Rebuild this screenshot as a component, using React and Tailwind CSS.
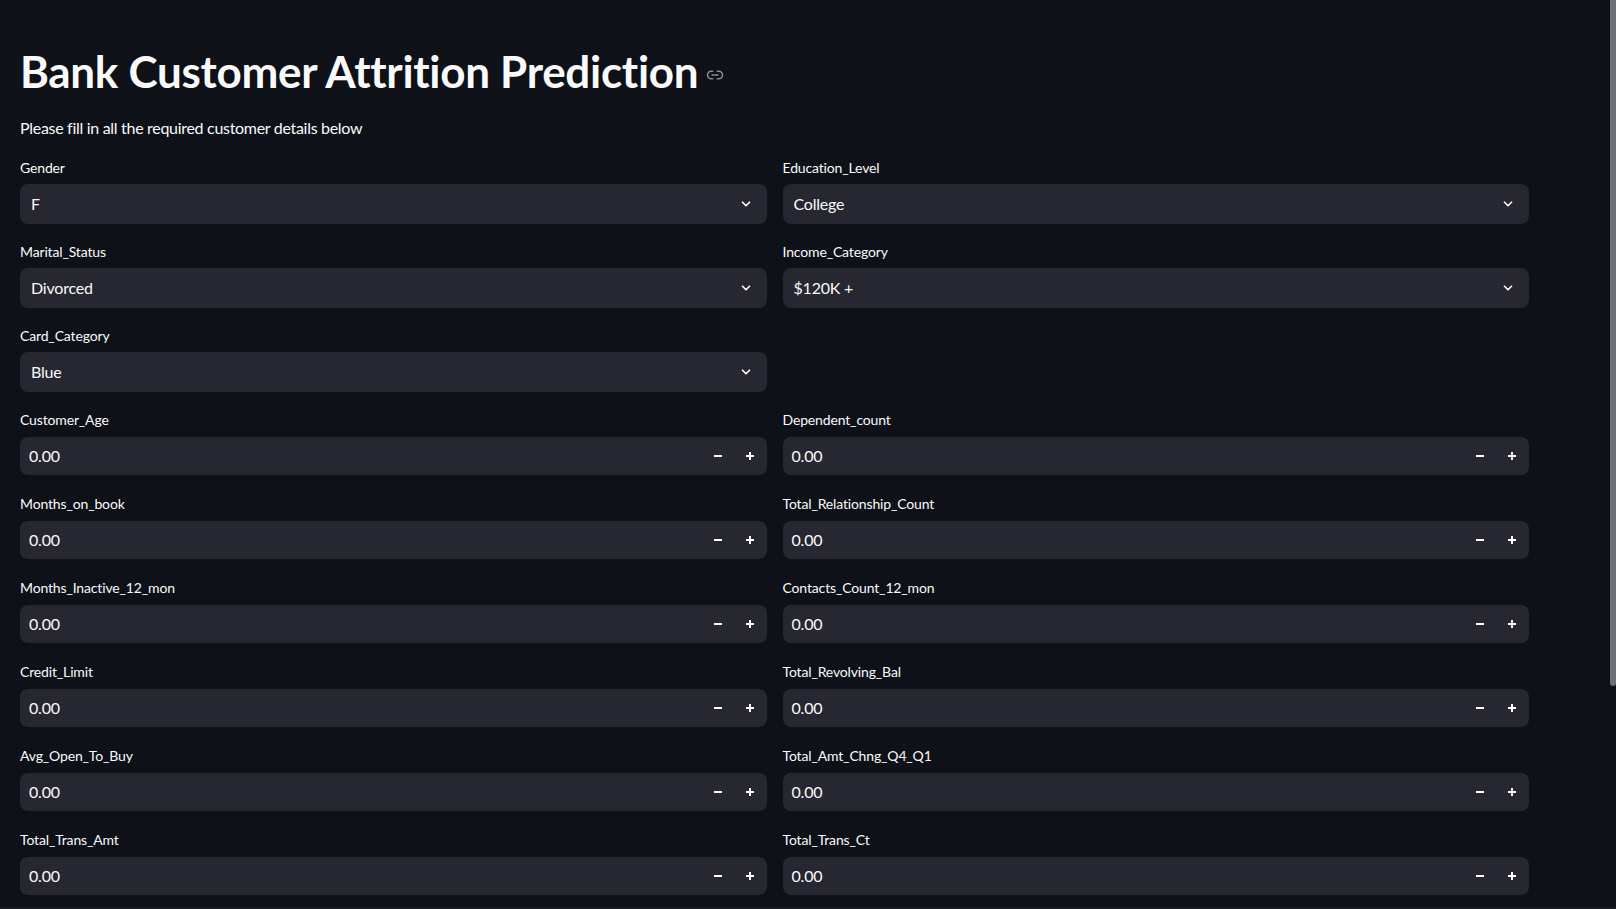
import React from 'react';

const font = { fontFamily: 'Lato, "Noto Sans", sans-serif' };

const selects = [
    [{ label: 'Gender', value: 'F' }, { label: 'Education_Level', value: 'College' }],
    [{ label: 'Marital_Status', value: 'Divorced' }, { label: 'Income_Category', value: '$120K +' }],
    [{ label: 'Card_Category', value: 'Blue' }, null],
];

const numbers = [
    ['Customer_Age', 'Dependent_count'],
    ['Months_on_book', 'Total_Relationship_Count'],
    ['Months_Inactive_12_mon', 'Contacts_Count_12_mon'],
    ['Credit_Limit', 'Total_Revolving_Bal'],
    ['Avg_Open_To_Buy', 'Total_Amt_Chng_Q4_Q1'],
    ['Total_Trans_Amt', 'Total_Trans_Ct'],
];

function Chevron() {
    return (
        <svg width="14" height="14" viewBox="0 0 24 24" fill="none" stroke="#fafafa" strokeWidth="3" strokeLinecap="round" strokeLinejoin="round">
            <path d="M6 9l6 6 6-6" />
        </svg>
    );
}

function Minus() {
    return (
        <svg width="10" height="10" viewBox="0 0 10 10">
            <rect x="1" y="4" width="8" height="2" fill="#fafafa" />
        </svg>
    );
}

function Plus() {
    return (
        <svg width="10" height="10" viewBox="0 0 10 10">
            <rect x="1" y="4" width="8" height="2" fill="#fafafa" />
            <rect x="4" y="1" width="2" height="8" fill="#fafafa" />
        </svg>
    );
}

function SelectBox({ label, value }) {
    return (
        <div className="flex flex-col">
            <label className="text-[14px] leading-5 tracking-[-0.15px] text-[#fafafa]">{label}</label>
            <div className="mt-[6px] h-[40px] rounded-lg bg-[#262730] flex items-center justify-between pl-[11px] pr-[14px]">
                <span className="text-[16px] tracking-[-0.2px] text-[#fafafa]">{value}</span>
                <Chevron />
            </div>
        </div>
    );
}

function NumberBox({ label }) {
    return (
        <div className="flex flex-col">
            <label className="text-[14px] leading-5 tracking-[-0.15px] text-[#fafafa]">{label}</label>
            <div className="mt-[7px] h-[38px] rounded-lg bg-[#262730] flex items-center pl-[9px] pr-[12px]">
                <span className="flex-1 text-[16px] tracking-[-0.2px] text-[#fafafa]">0.00</span>
                <div className="flex items-center gap-[22px]">
                    <Minus />
                    <Plus />
                </div>
            </div>
        </div>
    );
}

export default function App() {
    return (
        <div className="relative h-[909px] overflow-hidden bg-[#0e1117] text-[#fafafa]" style={font}>
            <div className="ml-[20px] w-[1509px] pt-[45px]">
                <div className="flex items-center">
                    <h1 className="text-[44px] leading-[53px] font-bold tracking-[-0.3px]">Bank Customer Attrition Prediction</h1>
                    <svg className="ml-[8px] mt-[6px]" width="18" height="18" viewBox="0 0 24 24" fill="none" stroke="#8b8d93" strokeWidth="2" strokeLinecap="round">
                        <path d="M9 17H7A5 5 0 0 1 7 7h2" />
                        <path d="M15 7h2a5 5 0 1 1 0 10h-2" />
                        <line x1="8" y1="12" x2="16" y2="12" />
                    </svg>
                </div>
                <p className="mt-[18px] text-[16px] leading-6 tracking-[-0.3px]">Please fill in all the required customer details below</p>

                <div className="mt-[18px]">
                    {selects.map((row, i) => (
                        <div key={i} className="grid grid-cols-2 gap-x-4 mb-[18px]">
                            {row.map((f, j) => (f ? <SelectBox key={j} {...f} /> : <div key={j} />))}
                        </div>
                    ))}
                    {numbers.map((row, i) => (
                        <div key={i} className="grid grid-cols-2 gap-x-4 mb-[19px]">
                            {row.map((l) => <NumberBox key={l} label={l} />)}
                        </div>
                    ))}
                </div>
            </div>

            {/* scrollbar overlay */}
            <div className="absolute right-0 top-0 w-[6px] h-[686px] rounded-b bg-[#6f7074]" />
            <div className="absolute left-0 bottom-0 w-full h-[2px] bg-[#1a1c23]" />
        </div>
    );
}
